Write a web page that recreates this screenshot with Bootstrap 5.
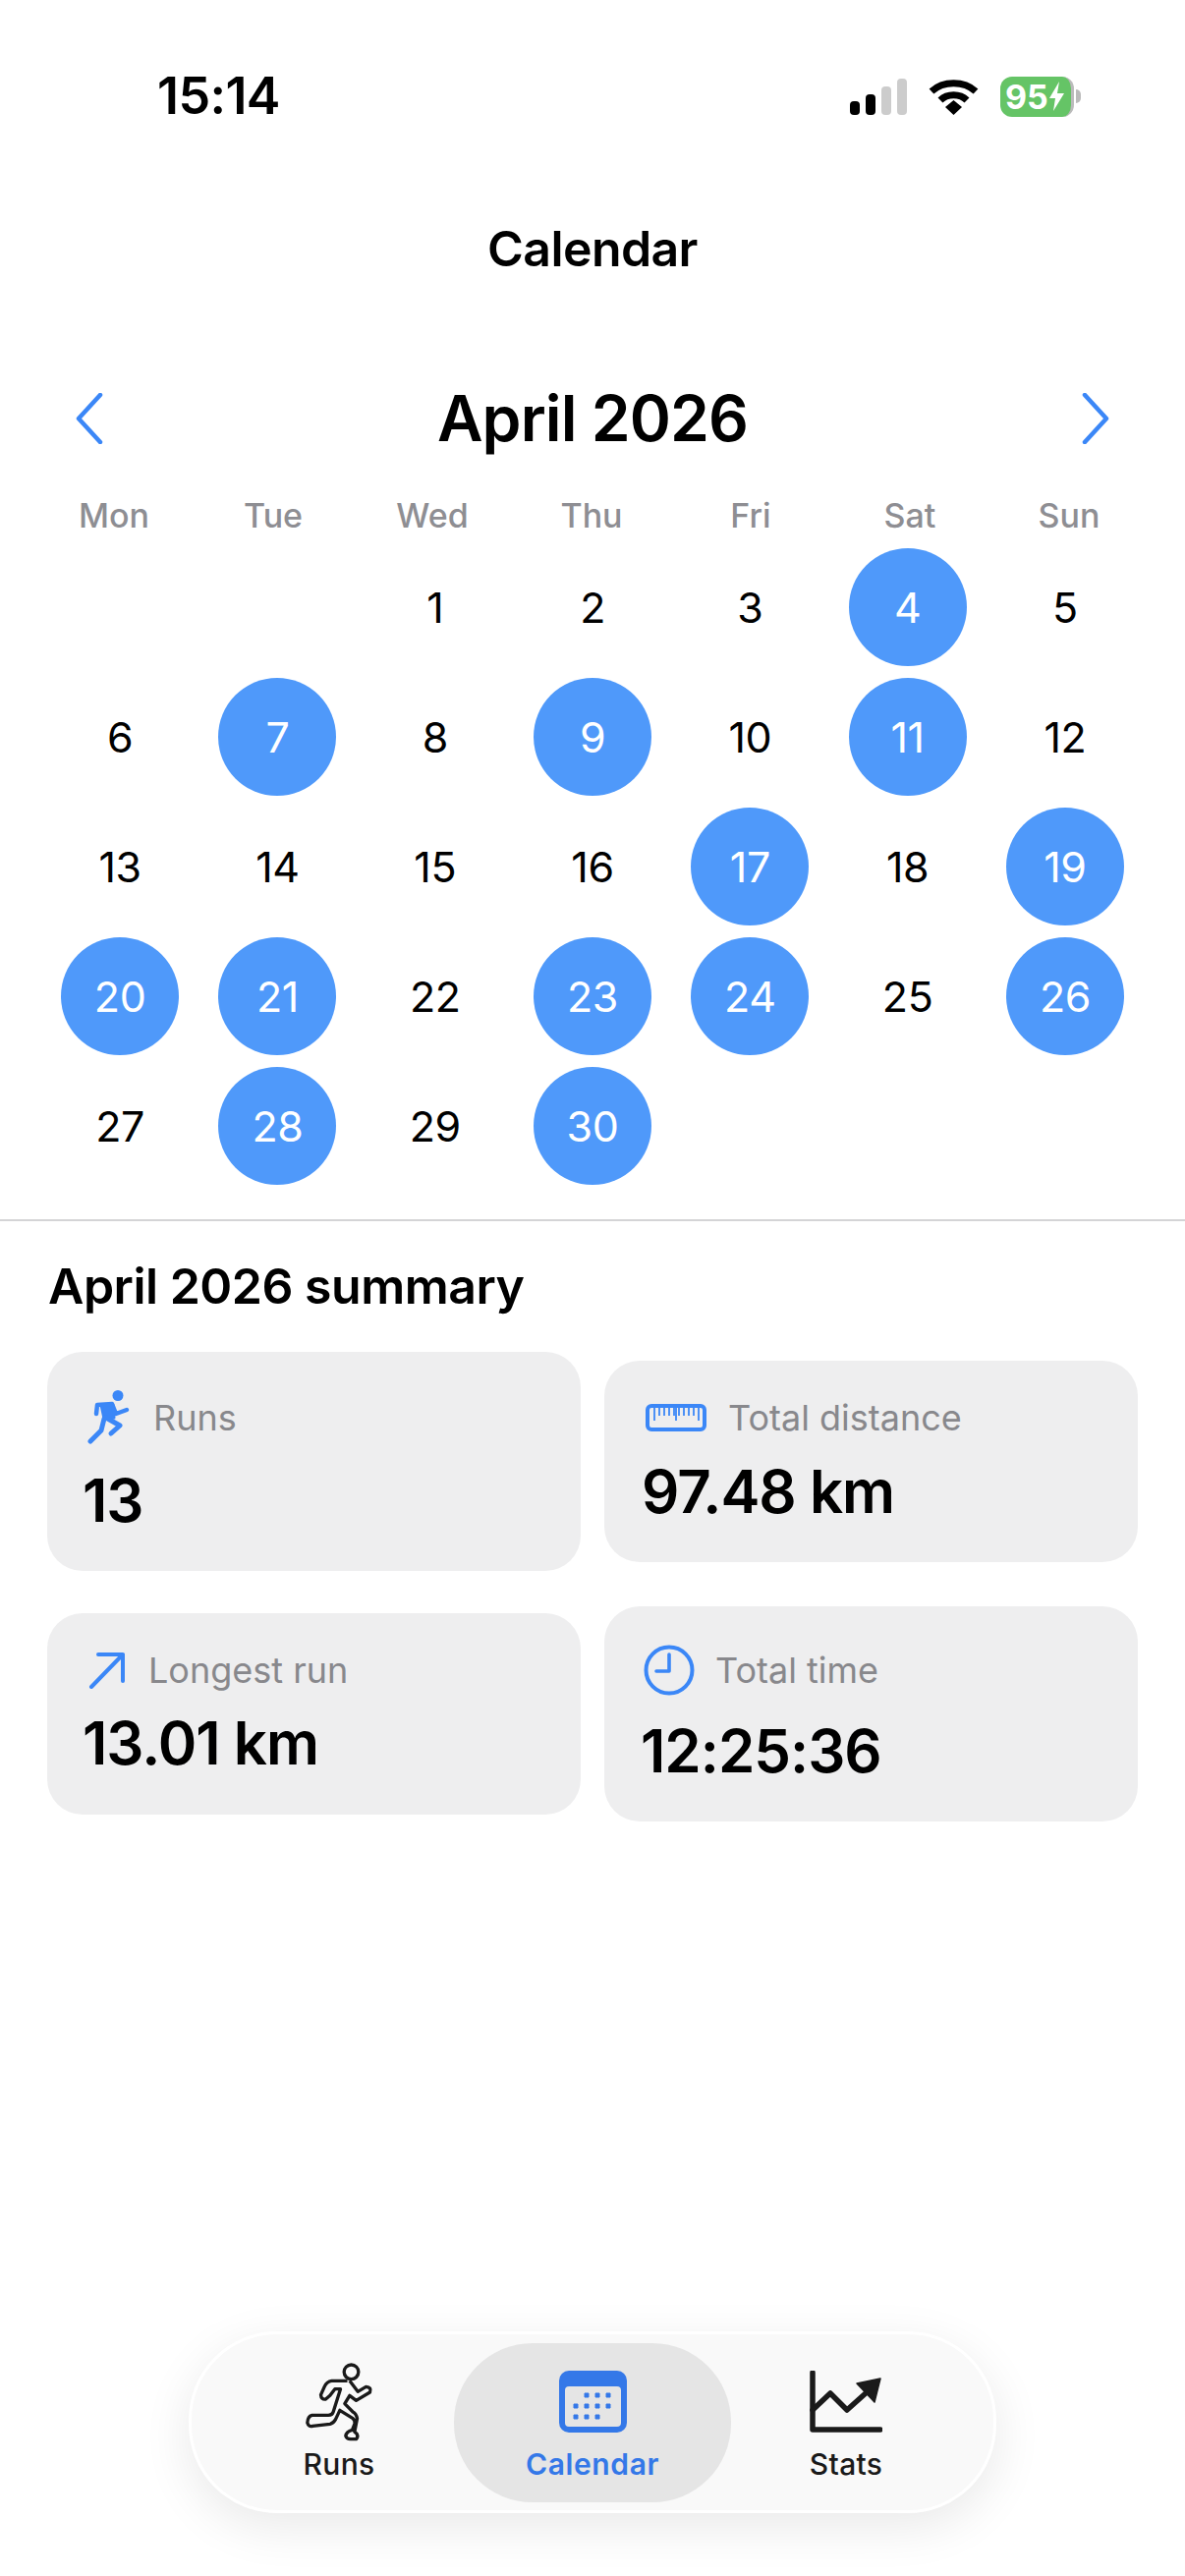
<!DOCTYPE html>
<html lang="en">
  <head>
    <meta charset="UTF-8" />
    <meta name="viewport" content="width=device-width, initial-scale=1.0" />
    <link href="https://cdn.jsdelivr.net/npm/bootstrap@5.3.2/dist/css/bootstrap.min.css" rel="stylesheet" />
    <title>Calendar</title>
    <style>
      body {
        font-family: Inter, "Liberation Sans", sans-serif;
        background: #fff;
        color: #000;
      }
      .screen { min-height: 2622px; }
      .status-row { height: 198px; padding: 76px 106px 0 160px; }
      .status-time { font-size: 52px; font-weight: 600; line-height: 44px; letter-spacing: -0.6px; }
      .status-icons { gap: 22px; height: 44px; }
      .battery-box {
        width: 75px; height: 41px; border-radius: 12px; background: #65c466;
        color: #fff; font-size: 34px; font-weight: 700; line-height: 41px; padding-left: 5px;
        border-right: 3px solid #bbb; gap: 0;
      }
      .battery-nub { width: 5px; height: 14px; background: #bbb; border-radius: 0 7px 7px 0; margin-left: 2px; }
      .page-title { font-size: 50px; font-weight: 600; line-height: 60px; letter-spacing: -0.6px; height: 60px; margin-top: 25px; }
      .month-row { height: 88px; margin-top: 99px; padding: 0 77px; }
      .month-name { font-size: 64px; font-weight: 600; line-height: 88px; letter-spacing: -0.9px; }
      .week-head { display: grid; grid-template-columns: repeat(7, 162px); padding-left: 35px; margin-top: 34px; height: 42px; }
      .week-head div { text-align: center; font-size: 34px; font-weight: 500; line-height: 42px; color: #8e8e93; }
      .day-grid { display: grid; grid-template-columns: repeat(7, 160.3px); grid-auto-rows: 132px; padding-left: 42px; margin-top: 6px; }
      .day-cell { display: flex; align-items: center; justify-content: center; font-size: 43px; letter-spacing: -0.4px; }
      .day-on { width: 120px; height: 120px; border-radius: 50%; background: #4f99fa; color: #fff; }
      .split-line { height: 2px; background: #d4d4d6; margin-top: 29px; }
      .sum-title { font-size: 50px; font-weight: 600; line-height: 60px; letter-spacing: -0.5px; padding-left: 49px; margin-top: 36px; }
      .stat-row { display: flex; align-items: center; gap: 24px; padding-left: 48px; }
      .stat-box { width: 543px; background: #eeeeef; border-radius: 36px; padding-left: 36px; }
      .stat-head { display: flex; align-items: center; height: 56px; }
      .stat-name { font-size: 36px; line-height: 56px; color: #88888c; }
      .stat-val { font-size: 60px; font-weight: 600; line-height: 70px; letter-spacing: -1px; }
      .dock {
        width: 822px; height: 185px; margin: auto 0 64px 192px; padding: 9px;
        background: #f9f9f9; border: 3px solid #fff; border-radius: 90px;
        box-shadow: 0 14px 50px rgba(0, 0, 0, 0.09);
      }
      .dock-item { display: flex; flex-direction: column; align-items: center; font-size: 30px; font-weight: 500; line-height: 36px; letter-spacing: 0.3px; color: #1a1a1a; }
      .dock-on { width: 282px; height: 162px; background: #e5e5e5; border-radius: 80px; color: #3478e8; padding-top: 28px; font-weight: 600; letter-spacing: 0.6px; }
    </style>
  </head>

  <body>
    <div class="screen d-flex flex-column">
      <!-- status bar -->
      <div class="status-row d-flex justify-content-between">
        <div class="status-time">15:14</div>
        <div class="status-icons d-flex align-items-center">
          <svg width="58" height="37" viewBox="0 0 58 37">
            <rect x="0" y="23" width="10" height="14" rx="4" fill="#000" />
            <rect x="16" y="16" width="10" height="21" rx="4" fill="#000" />
            <rect x="32" y="8" width="10" height="29" rx="4" fill="#ccc" />
            <rect x="48" y="0" width="10" height="37" rx="4" fill="#ccc" />
          </svg>
          <svg width="51" height="37" viewBox="0 0 51 37">
            <path d="M3 13C15 2 36 2 48 13" fill="none" stroke="#000" stroke-width="7" />
            <path d="M12 22C19 15 32 15 39 22" fill="none" stroke="#000" stroke-width="7" />
            <path d="M17 29L25.5 22L34 29L25.5 37Z" fill="#000" />
          </svg>
          <div class="d-flex align-items-center">
            <div class="battery-box d-flex align-items-center">
              95<svg width="17" height="32" viewBox="0 0 17 32"><path d="M11 1L1 18H7L5 31L16 13H9Z" fill="#fff" /></svg>
            </div>
            <div class="battery-nub"></div>
          </div>
        </div>
      </div>

      <div class="page-title text-center">Calendar</div>

      <div class="month-row d-flex justify-content-between align-items-center">
        <svg width="28" height="52" viewBox="0 0 28 52"><path d="M25 2L3 26L25 50" fill="none" stroke="#3b87f7" stroke-width="4.5" stroke-linecap="round" stroke-linejoin="round" /></svg>
        <div class="month-name">April 2026</div>
        <svg width="28" height="52" viewBox="0 0 28 52"><path d="M3 2L25 26L3 50" fill="none" stroke="#3b87f7" stroke-width="4.5" stroke-linecap="round" stroke-linejoin="round" /></svg>
      </div>

      <div class="week-head">
        <div>Mon</div><div>Tue</div><div>Wed</div><div>Thu</div><div>Fri</div><div>Sat</div><div>Sun</div>
      </div>

      <div class="day-grid" id="days"></div>

      <div class="split-line"></div>

      <div class="sum-title">April 2026 summary</div>

      <div class="stat-row" style="margin-top: 37px">
        <div class="stat-box" style="height: 223px; padding-top: 39px">
          <div class="stat-head">
            <svg width="44" height="56" viewBox="0 0 44 56" style="margin-left: 5px; margin-right: 23px">
              <circle cx="31" cy="5.5" r="5.5" fill="#3b87f7" />
              <path d="M9 24L10 15L25 14L29 24L40 20" fill="none" stroke="#3b87f7" stroke-width="4.5" stroke-linecap="round" stroke-linejoin="round" />
              <path d="M14 15L26 15L27 28L17 29Z" fill="#3b87f7" stroke="#3b87f7" stroke-width="3" stroke-linejoin="round" />
              <path d="M19 28L33 36L24 44" fill="none" stroke="#3b87f7" stroke-width="5" stroke-linecap="round" stroke-linejoin="round" />
              <path d="M17 29L14 41L3 52" fill="none" stroke="#3b87f7" stroke-width="5" stroke-linecap="round" stroke-linejoin="round" />
            </svg>
            <div class="stat-name">Runs</div>
          </div>
          <div class="stat-val" style="margin-top: 21px">13</div>
        </div>
        <div class="stat-box" style="height: 205px; padding-top: 30px; padding-left: 38px">
          <div class="stat-head">
            <svg width="62" height="28" viewBox="0 0 62 28" style="margin-left: 4px; margin-right: 22px">
              <rect x="2" y="2" width="58" height="24" rx="4" fill="none" stroke="#3b87f7" stroke-width="4" />
              <path d="M9 4v9M14 4v8M19 4v8M24 4v8M29 4v8M34 4v8M39 4v8M44 4v8M49 4v8M54 4v8M31 4v13M9 4v13M54 4v13" stroke="#3b87f7" stroke-width="1.8" />
            </svg>
            <div class="stat-name">Total distance</div>
          </div>
          <div class="stat-val" style="margin-top: 12px">97.48 km</div>
        </div>
      </div>

      <div class="stat-row" style="margin-top: 36px">
        <div class="stat-box" style="height: 205px; padding-top: 30px">
          <div class="stat-head">
            <svg width="38" height="38" viewBox="0 0 38 38" style="margin-left: 6px; margin-right: 23px">
              <path d="M3 36L35 3M10 3H35V30" fill="none" stroke="#3b87f7" stroke-width="4" stroke-linecap="round" stroke-linejoin="round" />
            </svg>
            <div class="stat-name">Longest run</div>
          </div>
          <div class="stat-val" style="margin-top: 11px">13.01 km</div>
        </div>
        <div class="stat-box" style="height: 219px; padding-top: 37px; padding-left: 37px">
          <div class="stat-head">
            <svg width="52" height="52" viewBox="0 0 52 52" style="margin-left: 3px; margin-right: 21px">
              <circle cx="26" cy="26" r="23.5" fill="none" stroke="#3b87f7" stroke-width="4" />
              <path d="M26 10V27H13" fill="none" stroke="#3b87f7" stroke-width="3.6" stroke-linecap="round" stroke-linejoin="round" />
            </svg>
            <div class="stat-name">Total time</div>
          </div>
          <div class="stat-val" style="margin-top: 19px">12:25:36</div>
        </div>
      </div>

      <!-- floating tab bar -->
      <div class="dock d-flex align-items-center">
        <div class="dock-item" style="width: 258px; padding-left: 24px">
          <svg width="72" height="80" viewBox="85 45 215 240">
            <circle cx="230" cy="73" r="22" fill="none" stroke="#1a1a1a" stroke-width="10" />
            <path d="M218 100H170Q155 102 148 118L137 143Q138 158 152 156L165 145L180 125H197L175 195Q172 205 160 205H110Q97 208 96 228Q100 242 112 238L165 232Q175 230 182 218L195 190L235 215Q243 222 240 232L233 250Q215 255 213 268Q215 277 228 278L245 278Q252 272 247 262L240 256L248 215Q245 200 235 195L210 170L225 145L245 160L287 135Q293 120 275 118L250 133L225 100" fill="#f9f9f9" stroke="#1a1a1a" stroke-width="10" stroke-linejoin="round" />
          </svg>
          <div style="margin-top: 5px">Runs</div>
        </div>
        <div class="dock-item dock-on">
          <svg width="69" height="63" viewBox="0 0 69 63">
            <rect width="69" height="63" rx="10" fill="#3478e8" />
            <rect x="6" y="16" width="57" height="41" rx="4" fill="#e5e5e5" />
            <path d="M26 23h4v4h-4zM37 23h4v4h-4zM48 23h4v4h-4zM15 34h4v4h-4zM26 34h4v4h-4zM37 34h4v4h-4zM48 34h4v4h-4zM15 45h4v4h-4zM26 45h4v4h-4zM37 45h4v4h-4z" fill="#3478e8" stroke="#3478e8" stroke-linejoin="round" />
          </svg>
          <div style="margin-top: 14px">Calendar</div>
        </div>
        <div class="dock-item flex-grow-1" style="padding-right: 24px; padding-top: 8px">
          <svg width="74" height="64" viewBox="0 0 74 64">
            <path d="M3 2V60H72" fill="none" stroke="#1a1a1a" stroke-width="5.5" stroke-linecap="round" stroke-linejoin="round" />
            <path d="M3 40L21 23L38 40L57 23" fill="none" stroke="#1a1a1a" stroke-width="5.5" stroke-linecap="round" stroke-linejoin="round" />
            <path d="M48 13L72 8L66 32Z" fill="#1a1a1a" stroke="#1a1a1a" stroke-width="1.5" stroke-linejoin="round" />
          </svg>
          <div style="margin-top: 13px">Stats</div>
        </div>
      </div>
    </div>

    <script>
      // April 2026 starts on a Wednesday
      const RUN_DAYS = [4, 7, 9, 11, 17, 19, 20, 21, 23, 24, 26, 28, 30];
      let cells = "<div></div><div></div>";
      for (let i = 1; i <= 30; i++) {
        let cls = RUN_DAYS.includes(i) ? "day-cell day-on" : "day-cell";
        cells += `<div class="d-flex align-items-center justify-content-center"><div class="${cls}">${i}</div></div>`;
      }
      document.getElementById("days").innerHTML = cells;
    </script>
  </body>
</html>
